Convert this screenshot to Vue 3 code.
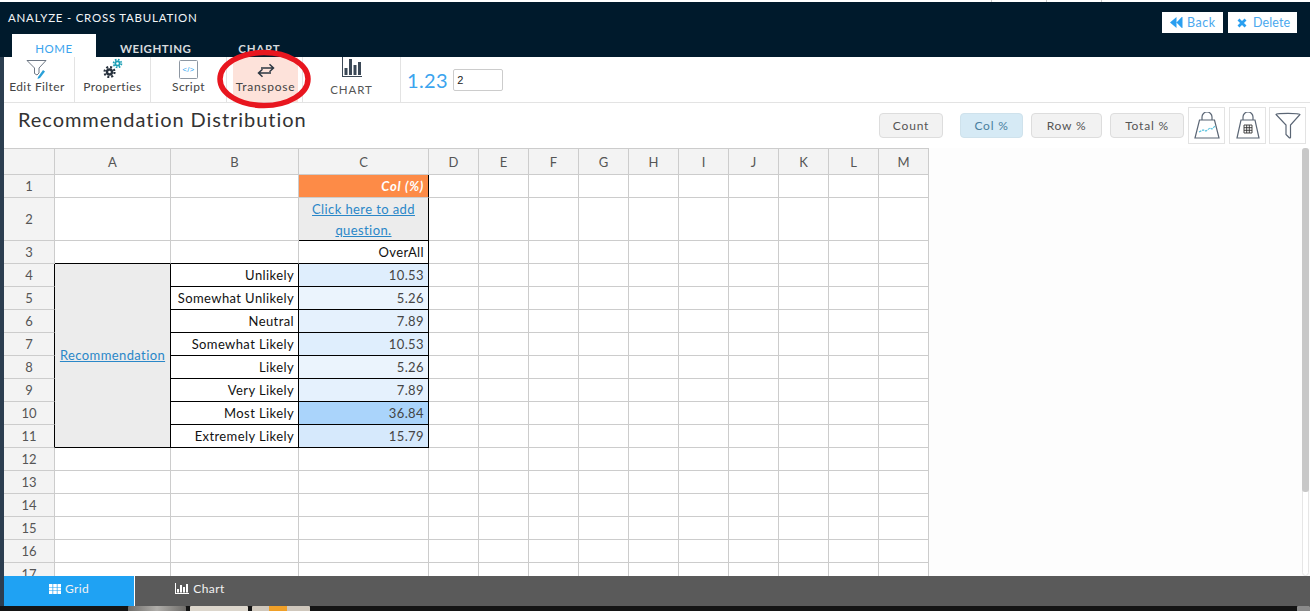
<script setup>
const cols = ['A','B','C','D','E','F','G','H','I','J','K','L','M']
const widths = [51,116,128,130,50,50,50,50,50,50,50,50,50,50]
const labels = ['Unlikely','Somewhat Unlikely','Neutral','Somewhat Likely','Likely','Very Likely','Most Likely','Extremely Likely']
const vals = [['10.53','#dfeefd'],['5.26','#ebf4fd'],['7.89','#e5f1fd'],['10.53','#dfeefd'],['5.26','#ebf4fd'],['7.89','#e5f1fd'],['36.84','#aad4fb'],['15.79','#d6e9fc']]
const blanks = Array.from({length:10})
const tail = [12,13,14,15,16,17]
</script>

<template>
  <div class="page">
    <div class="strip"></div>
    <div class="main">
      <div class="topline"><i></i><i></i><i></i></div>
      <header class="head">
        <div class="head-top">
          <span class="head-title">ANALYZE - CROSS TABULATION</span>
          <div class="head-btns">
            <button class="hbtn back"><svg width="13" height="11" viewBox="0 0 13 11"><path d="M6.500 0v11L0 5.500zM12.500 0.300v10.400c0 .3-.8.300-1 .1L6.500 5.500l5-5.200c.2-.2 1-.3 1 0z" fill="#2a9ff0"/></svg>Back</button>
            <button class="hbtn del"><svg width="10" height="10" viewBox="0 0 10 10"><path d="M1.500 1.500l7 7M8.500 1.500l-7 7" stroke="#2a9ff0" stroke-width="2.800"/></svg>Delete</button>
          </div>
        </div>
        <nav class="tabs">
          <span class="tab active">HOME</span>
          <span class="tab">WEIGHTING</span>
          <span class="tab">CHART</span>
        </nav>
      </header>

      <div class="toolbar">
        <div class="tool t1">
          <svg width="22" height="20" viewBox="0 0 22 20" fill="none"><path d="M1 1.500h19l-7 7.500v5l-2 2-2.500-1.500V9z" stroke="#5b6675" stroke-width=".9"/><path d="M12 18l5-7 2 1.500-5 6.500-2.500 1z" fill="#2aa0d8"/></svg>
          <span>Edit Filter</span>
        </div>
        <div class="tool t2">
          <svg width="20" height="21" viewBox="0 0 20 21" fill="none"><circle cx="6.500" cy="14" r="2.500" stroke="#27313d" stroke-width="2.400"/><circle cx="6.500" cy="14" r="5" stroke="#27313d" stroke-width="2.200" stroke-dasharray="2 1.930"/><circle cx="14.500" cy="5.500" r="2.150" stroke="#1c9fb5" stroke-width="1.700"/><circle cx="14.500" cy="5.500" r="3.900" stroke="#1c9fb5" stroke-width="1.800" stroke-dasharray="1.600 1.460"/></svg>
          <span>Properties</span>
        </div>
        <div class="tool t3">
          <svg width="19" height="19" viewBox="0 0 19 19" fill="none"><rect x=".5" y=".5" width="18" height="18" rx="1" stroke="#8d97a2"/><text x="9.500" y="12" font-size="7.500" text-anchor="middle" fill="#2a9ff0" font-family="Liberation Sans">&lt;/&gt;</text></svg>
          <span>Script</span>
        </div>
        <div class="tool t4">
          <div class="transpose">
            <svg width="18" height="15" viewBox="0 0 18 15" fill="none" stroke="#2c3742" stroke-width="1.500"><path d="M4 5h12.500M12.500 1.200L16.500 5l-4 3.800M14 10H1.500M5.500 6.200L1.500 10l4 3.800"/></svg>
            <span>Transpose</span>
          </div>
        </div>
        <div class="tool t5">
          <svg width="20" height="20" viewBox="0 0 20 20" fill="#3b4856"><path d="M0 0h1v19h19v1H0z"/><rect x="2.500" y="11" width="3" height="7"/><rect x="7" y="2" width="3" height="16"/><rect x="11.500" y="8" width="3" height="10"/><rect x="16" y="5" width="3" height="13"/></svg>
          <span>CHART</span>
        </div>
        <div class="decimals">
          <span class="dec-label">1.23</span>
          <input class="dec-input" value="2" />
        </div>
      </div>

      <div class="titlebar">
        <h1>Recommendation Distribution</h1>
        <div class="modes">
          <button class="mode count">Count</button>
          <button class="mode on">Col %</button>
          <button class="mode rowp">Row %</button>
          <button class="mode total">Total %</button>
          <div class="ibox"><svg width="26" height="27" viewBox="0 0 26 27" fill="none" stroke="#5b6675" stroke-width="1.200"><path d="M8 8V5a5 5 0 0 1 10 0v3"/><path d="M5.500 8h15L25 26H1z"/><path d="M5 20l4-2 3 1 4-3 2 1 3-3" stroke="#5cc5e0" stroke-dasharray="2.500 .8"/></svg></div>
          <div class="ibox"><svg width="24" height="27" viewBox="0 0 24 27" fill="none" stroke="#5b6675" stroke-width="1.200"><path d="M7 8V5a5 5 0 0 1 10 0v3"/><path d="M5 8h14l4 18H1z"/><path d="M8 13h8v8H8zM8 15.700h8M8 18.300h8M10.700 13v8M13.300 13v8" stroke="#333" stroke-width=".9"/></svg></div>
          <div class="ibox"><svg width="26" height="27" viewBox="0 0 26 27" fill="none" stroke="#5b6675" stroke-width="1.200"><path d="M1 2.500C1 1 25 1 25 2.500L15.500 13v12.500c0 .6-1 .5-1.500 0l-3-3V13z"/></svg></div>
        </div>
      </div>

      <div class="body">
        <table class="sheet">
          <colgroup><col v-for="(w,i) in widths" :key="i" :style="{width: w + 'px'}" /></colgroup>
          <tbody>
            <tr class="rh">
              <th></th>
              <th v-for="c in cols" :key="c">{{ c }}</th>
            </tr>
            <tr>
              <th>1</th><td></td><td></td>
              <td class="orange">Col (%)</td>
              <td v-for="b in blanks" :key="b"></td>
            </tr>
            <tr class="tall">
              <th>2</th><td></td><td></td>
              <td class="addq"><a>Click here to add question.</a></td>
              <td v-for="b in blanks" :key="b"></td>
            </tr>
            <tr>
              <th>3</th><td class="bb"></td><td class="bb"></td>
              <td class="bk text">OverAll</td>
              <td v-for="b in blanks" :key="b"></td>
            </tr>
            <tr v-for="(l,i) in labels" :key="l">
              <th class="edge">{{ i + 4 }}</th>
              <td v-if="i===0" rowspan="8" class="rec"><a>Recommendation</a></td>
              <td class="bk text">{{ l }}</td>
              <td class="bk num" :style="{background: vals[i][1]}">{{ vals[i][0] }}</td>
              <td v-for="b in blanks" :key="b"></td>
            </tr>
            <tr v-for="n in tail" :key="n">
              <th>{{ n }}</th>
              <td v-for="c in cols" :key="c"></td>
            </tr>
          </tbody>
        </table>
        <div class="scroll"><div class="thumb"></div></div>
      </div>

      <div class="footer">
        <div class="ft active"><svg width="12" height="10" viewBox="0 0 12 10" fill="#fff"><path d="M0 0h3.500v3H0zM4.200 0h3.600v3H4.200zM8.500 0H12v3H8.500zM0 3.500h3.500v3H0zM4.200 3.500h3.600v3H4.200zM8.500 3.500H12v3H8.500zM0 7h3.500v3H0zM4.200 7h3.600v3H4.200zM8.500 7H12v3H8.500z"/></svg>Grid</div>
        <div class="ft"><svg width="14" height="11" viewBox="0 0 14 11" fill="#fff"><path d="M0 0h1v10h13v1H0z"/><rect x="2" y="6" width="2" height="3.500"/><rect x="5" y="2" width="2" height="7.500"/><rect x="8" y="4" width="2" height="5.500"/><rect x="11" y="1" width="2" height="8.500"/></svg>Chart</div>
      </div>
      <div class="taskbar">
        <i class="th a"></i><i class="th b"></i><i class="th c"></i><i class="th d"></i>
      </div>
    </div>

    <svg class="ring" width="94" height="60" viewBox="0 0 94 60" fill="none"><ellipse cx="47" cy="30" rx="44" ry="26.500" stroke="#e8161f" stroke-width="5.500"/></svg>
  </div>
</template>

<style>
html, body { margin: 0; padding: 0; overflow: hidden; background: #fff; }
</style>

<style scoped>
.page { position: relative; display: flex; width: 1310px; height: 611px; overflow: hidden; font-family: Lato, "Open Sans", sans-serif; color: #333; }
.strip { width: 4px; flex: none; background: #2c3e50; position: relative; z-index: 3; }
.main { flex: 1; min-width: 0; display: flex; flex-direction: column; height: 611px; margin-left: -4px; }
.topline { flex: none; height: 2px; background: #fff; position: relative; z-index: 4; display: flex; }
.topline i { width: 1px; background: #ccc; margin-left: 54px; }
.topline i:first-child { margin-left: 991px; }
.head { flex: none; height: 55px; background: #001a2c; display: flex; flex-direction: column; position: relative; z-index: 4; }
.head-top { height: 32px; display: flex; justify-content: space-between; padding: 2px 13px 0 8px; box-sizing: border-box; }
.head-title { color: #f2f5f7; font-size: 11.500px; letter-spacing: .76px; line-height: 28px; }
.head-btns { display: flex; gap: 5px; padding-top: 8px; }
.hbtn { height: 21px; border: 0; background: #fff; color: #4aa8ee; font: 12.500px Lato, sans-serif; letter-spacing: .5px; padding: 0 0 0 8px; display: flex; align-items: center; gap: 4px; box-sizing: border-box; }
.back { width: 61px; }
.del { width: 69px; padding-left: 9px; gap: 6px; letter-spacing: .1px; }
.tabs { display: flex; padding-left: 12px; height: 23px; }
.tab { color: #d6dadd; font-size: 11.500px; font-weight: 700; letter-spacing: .5px; line-height: 29px; padding: 0 24px; }
.tab:last-child { letter-spacing: .7px; padding-left: 23px; }
.tab.active { width: 84px; box-sizing: border-box; background: #fff; color: #3ba4ee; font-weight: 400; text-align: center; padding: 0; }
.toolbar { flex: none; height: 46px; box-sizing: border-box; border-bottom: 1px solid #e3e3e3; display: flex; align-items: stretch; }
.tool { display: flex; flex-direction: column; align-items: center; box-sizing: border-box; border-right: 1px solid #e3e3e3; font-size: 12px; letter-spacing: .42px; color: #444; padding-top: 2px; }
.tool span { line-height: 14px; margin-top: 1px; }
.t1 { width: 75px; padding-left: 0; }
.t2 { width: 76px; padding-top: 1px; }
.t3 { width: 76px; padding-top: 3px; }
.t3 span { margin-top: 1px; }
.t4 { width: 76px; align-items: flex-start; padding: 0 0 0 6px; }
.transpose { width: 65px; height: 45px; box-sizing: border-box; background: #fde2da; display: flex; flex-direction: column; align-items: center; padding-top: 6px; }
.transpose span { margin-top: 2px; letter-spacing: .75px; }
.t5 { width: 98px; padding: 0; font-size: 11.500px; letter-spacing: .95px; color: #555; }
.t5 span { margin-top: 6px; }
.decimals { display: flex; align-items: center; padding-left: 6px; gap: 5px; height: 45px; }
.dec-label { color: #3ba4ee; font-size: 20px; letter-spacing: .4px; }
.dec-input { width: 50px; height: 22px; box-sizing: border-box; border: 1px solid #ccc; border-radius: 2px; padding: 0 3px; font: 11px "Liberation Sans", sans-serif; color: #222; outline: none; }
.titlebar { flex: none; height: 45px; display: flex; justify-content: space-between; padding-left: 18px; box-sizing: border-box; }
h1 { margin: 0; font-size: 20px; font-weight: 400; letter-spacing: .95px; color: #333; line-height: 33px; }
.modes { display: flex; align-items: flex-start; padding: 4px 4px 0 0; gap: 4px; }
.mode { height: 25px; margin-top: 6px; padding: 0; border: 1px solid #ddd; border-radius: 4px; background: #f2f2f2; color: #555; font: 12px Lato, sans-serif; letter-spacing: .8px; width: 64px; }
.count { margin-right: 13px; }
.mode.on { background: #d6eaf5; color: #4a7f9f; width: 63px; border-color: #cfe2ec; margin-right: 4px; }
.rowp { width: 71px; margin-right: 4px; }
.total { width: 74px; }
.ibox { width: 37px; height: 37px; box-sizing: border-box; border: 1px solid #e3e3e3; display: flex; align-items: center; justify-content: center; }
.ibox:last-child { margin-left: -1px; }
.body { flex: 1; min-height: 0; overflow: hidden; position: relative; background: #fdfdfd; }
.sheet { margin-left: 4px; table-layout: fixed; width: 925px; border-collapse: separate; border-spacing: 0; border-top: 1px solid #ccc; font-size: 13px; letter-spacing: .4px; background: #fff; }
.sheet th, .sheet td { height: 23px; box-sizing: border-box; padding: 0 4px; border-right: 1px solid #ccc; border-bottom: 1px solid #ccc; overflow: hidden; white-space: nowrap; }
.sheet th { background: #f3f3f3; font-weight: 400; color: #555; text-align: center; font-size: 13px; letter-spacing: 0; }
.sheet .rh th { height: 26px; }
.sheet .tall td, .sheet .tall th { height: 43px; }
.sheet th.edge { border-right-color: #000; }
.sheet .bb { border-bottom-color: #000; }
.sheet .orange { background: #fd8b47; color: #fff; font-weight: 700; font-style: italic; text-align: right; letter-spacing: .75px; border-right-color: #000; }
.sheet .addq { background: #ececec; text-align: center; white-space: normal; line-height: 21px; border-right-color: #000; border-bottom-color: #000; }
.addq a { display: block; padding-top: 1px; margin-bottom: -1px; }
.addq a, .rec a { color: #2a87c8; text-decoration: underline; }
.sheet .bk { border-right-color: #000; border-bottom-color: #000; }
.text { text-align: right; color: #111; }
.num { text-align: right; color: #444; }
.sheet .rec { background: #ececec; text-align: center; padding: 0 0 2px; border-right-color: #000; border-bottom-color: #000; }
.scroll { position: absolute; right: 1px; top: 0; bottom: 0; width: 7px; box-sizing: border-box; background: #fff; border: 1px solid #e6e6e6; border-radius: 4px; }
.thumb { position: absolute; left: -1px; right: -1px; top: -1px; height: 344px; background: #c8c8c8; border-radius: 3px; }
.footer { flex: none; height: 30px; margin-left: 4px; background: #5a5a5a; display: flex; color: #f2f2f2; font-size: 12px; letter-spacing: .4px; position: relative; z-index: 2; }
.ft { width: 130px; display: flex; align-items: center; justify-content: center; gap: 4px; padding-bottom: 5px; box-sizing: border-box; }
.ft.active { width: 131px; background: #1fa2f3; border-right: 1px solid #fff; }
.taskbar { flex: none; height: 5px; background: #141414; position: relative; z-index: 4; display: flex; align-items: flex-end; gap: 4px; padding-left: 128px; }
.th { height: 5px; width: 58px; border-radius: 1px 1px 0 0; }
.a { background: linear-gradient(90deg, #6d6b68, #b0aeaa, #6d6b68); }
.b { background: #dcd6cc; }
.c { background: linear-gradient(90deg, #cfc7bc 30%, #f0a028 30%, #f0a028 60%, #cfc7bc 60%); }
.d { width: 13px; background: #8a8a8a; margin-left: auto; }
.ring { position: absolute; left: 217px; top: 49px; z-index: 5; pointer-events: none; }
</style>
